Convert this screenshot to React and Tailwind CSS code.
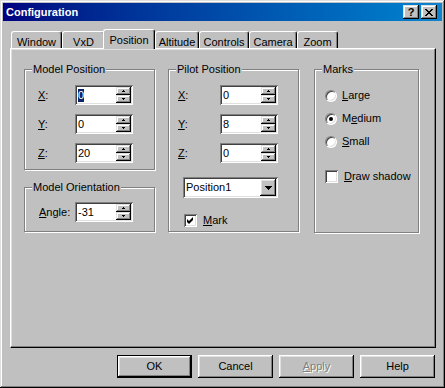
import React from "react";

const raised =
  "bg-[#c0c0c0] shadow-[inset_-1px_-1px_#000,inset_1px_1px_#fff,inset_-2px_-2px_#808080,inset_2px_2px_#dfdfdf]";
const smallRaised =
  "bg-[#c0c0c0] shadow-[inset_-1px_-1px_#000,inset_1px_1px_#dfdfdf,inset_-2px_-2px_#808080,inset_2px_2px_#fff]";
const sunken =
  "bg-white shadow-[inset_1px_1px_#808080,inset_-1px_-1px_#fff,inset_2px_2px_#404040,inset_-2px_-2px_#dfdfdf]";

function U({ children }) {
  return <span className="underline underline-offset-[1px] decoration-1">{children}</span>;
}

function Arrow({ down }) {
  return (
    <svg width="3" height="2" viewBox="0 0 3 2" className="block">
      {down ? (
        <path d="M0 0h3v1H2v1H1V1H0z" fill="#000" />
      ) : (
        <path d="M1 0h1v1h1v1H0V1h1z" fill="#000" />
      )}
    </svg>
  );
}

function Spin({ value, selected }) {
  return (
    <div className={`flex h-[20px] w-[58px] p-[2px] ${sunken}`}>
      <div className="flex flex-1 items-center pl-[1px] leading-[13px]">
        {selected ? <span className="bg-[#0a246a] text-white">{value}</span> : <span>{value}</span>}
      </div>
      <div className="flex w-[15px] flex-col">
        <div className={`flex h-[8px] items-center justify-center ${smallRaised}`}>
          <Arrow />
        </div>
        <div className={`flex h-[8px] items-center justify-center ${smallRaised}`}>
          <Arrow down />
        </div>
      </div>
    </div>
  );
}

function Group({ title, className, children }) {
  return (
    <div
      className={`relative border border-[#808080] shadow-[1px_1px_0_#fff,inset_1px_1px_0_#fff] ${className}`}
    >
      <span className="absolute -top-[7px] left-[7px] bg-[#c0c0c0] px-[1px] leading-[13px]">{title}</span>
      {children}
    </div>
  );
}

function Radio({ checked, children }) {
  return (
    <div className="flex h-[13px] items-center">
      <div className="relative flex h-[12px] w-[12px] items-center justify-center rounded-full border border-t-[#808080] border-l-[#808080] border-r-white border-b-white bg-white shadow-[inset_1px_1px_#404040,inset_-1px_-1px_#dfdfdf]">
        {checked && <div className="h-[4px] w-[4px] rounded-full bg-black" />}
      </div>
      <span className="ml-[5px] leading-[13px]">{children}</span>
    </div>
  );
}

function Check({ checked, children }) {
  return (
    <div className="flex h-[13px] items-center">
      <div className={`flex h-[13px] w-[13px] items-center justify-center ${sunken}`}>
        {checked && (
          <svg width="13" height="13" viewBox="0 0 13 13" className="block">
            <path d="M3 5 L5 7 L9 3 L9 6 L5 10 L3 8 Z" fill="#000" />
          </svg>
        )}
      </div>
      <span className="ml-[6px] leading-[13px]">{children}</span>
    </div>
  );
}

function Button({ children, def, disabled }) {
  return (
    <div
      className={`flex h-[23px] w-[75px] items-center justify-center ${
        def
          ? "border border-black bg-[#c0c0c0] shadow-[inset_-1px_-1px_#000,inset_1px_1px_#fff,inset_-2px_-2px_#808080,inset_2px_2px_#dfdfdf]"
          : raised
      }`}
    >
      <span className={disabled ? "text-[#808080] [text-shadow:1px_1px_0_#fff]" : ""}>{children}</span>
    </div>
  );
}

function Tab({ children, w, selected }) {
  if (selected) {
    return (
      <div
        className={`relative z-10 -ml-[2px] flex h-[20px] ${w} items-start justify-center rounded-t-[3px] border-l border-t border-r border-l-white border-t-white border-r-black bg-[#c0c0c0] pt-[2px] shadow-[inset_-1px_0_#808080]`}
      >
        {children}
      </div>
    );
  }
  return (
    <div
      className={`mt-[2px] flex h-[17px] ${w} items-start justify-center rounded-t-[3px] border-l border-t border-r border-l-white border-t-white border-r-black bg-[#c0c0c0] pt-[2px] shadow-[inset_-1px_0_#808080]`}
    >
      {children}
    </div>
  );
}

const xCells = [
  [0, 0], [1, 0], [6, 0], [7, 0],
  [1, 1], [2, 1], [5, 1], [6, 1],
  [2, 2], [3, 2], [4, 2], [5, 2],
  [3, 3], [4, 3],
  [2, 4], [3, 4], [4, 4], [5, 4],
  [1, 5], [2, 5], [5, 5], [6, 5],
  [0, 6], [1, 6], [6, 6], [7, 6],
];

export default function App() {
  return (
    <div
      className={`flex h-[388px] w-[445px] flex-col bg-[#c0c0c0] p-[3px] text-[11px] text-black font-['Liberation_Sans',Arial,sans-serif] shadow-[inset_-1px_-1px_#000,inset_1px_1px_#dfdfdf,inset_-2px_-2px_#808080,inset_2px_2px_#fff]`}
    >
      {/* Title bar */}
      <div className="flex h-[18px] items-center bg-linear-to-r from-[#000080] to-[#1084d0] pl-[3px] pr-[5px]">
        <span className="flex-1 font-bold text-white leading-[13px]">Configuration</span>
        <div className={`flex h-[14px] w-[16px] items-center justify-center ${smallRaised}`}>
          <span className="font-bold leading-[11px] text-[11px]">?</span>
        </div>
        <div className={`ml-[2px] flex h-[14px] w-[16px] items-center justify-center ${smallRaised}`}>
          <svg width="8" height="7" viewBox="0 0 8 7" className="block">
            {xCells.map(([x, y], i) => (
              <rect key={i} x={x} y={y} width="1" height="1" fill="#000" />
            ))}
          </svg>
        </div>
      </div>

      {/* Tabs */}
      <div className="ml-[8px] mt-[8px] flex h-[19px] items-start">
        <Tab w="w-[51px]">Window</Tab>
        <Tab w="w-[43px]">VxD</Tab>
        <Tab w="w-[52px]" selected>
          Position
        </Tab>
        <Tab w="w-[44px]">Altitude</Tab>
        <Tab w="w-[50px]">Controls</Tab>
        <Tab w="w-[48px]">Camera</Tab>
        <Tab w="w-[41px]">Zoom</Tab>
      </div>

      {/* Panel */}
      <div className="ml-[7px] flex h-[300px] w-[426px] items-start border-l border-t border-r border-b border-l-white border-t-white border-r-black border-b-black pl-[13px] pt-[20px] shadow-[inset_-1px_-1px_#808080,inset_1px_1px_#dfdfdf]">
        {/* Column 1 */}
        <div className="flex w-[131px] flex-col">
          <Group title="Model Position" className="h-[101px] pl-[13px] pt-[15px]">
            <div className="flex flex-col gap-[9px]">
              <div className="flex items-center">
                <span className="w-[37px]">
                  <U>X</U>:
                </span>
                <Spin value="0" selected />
              </div>
              <div className="flex items-center">
                <span className="w-[37px]">
                  <U>Y</U>:
                </span>
                <Spin value="0" />
              </div>
              <div className="flex items-center">
                <span className="w-[37px]">
                  <U>Z</U>:
                </span>
                <Spin value="20" />
              </div>
            </div>
          </Group>
          <Group title="Model Orientation" className="mt-[17px] h-[45px] pl-[14px] pt-[14px]">
            <div className="flex items-center">
              <span className="w-[36px]">
                <U>A</U>ngle:
              </span>
              <Spin value="-31" />
            </div>
          </Group>
        </div>

        {/* Column 2 */}
        <Group title="Pilot Position" className="ml-[13px] h-[163px] w-[131px] pl-[9px] pt-[15px]">
          <div className="flex flex-col gap-[9px]">
            <div className="flex items-center">
              <span className="w-[42px]">
                <U>X</U>:
              </span>
              <Spin value="0" />
            </div>
            <div className="flex items-center">
              <span className="w-[42px]">
                <U>Y</U>:
              </span>
              <Spin value="8" />
            </div>
            <div className="flex items-center">
              <span className="w-[42px]">
                <U>Z</U>:
              </span>
              <Spin value="0" />
            </div>
          </div>
          <div className={`ml-[5px] mt-[14px] flex h-[21px] w-[95px] p-[2px] ${sunken}`}>
            <div className="flex flex-1 items-center pl-[1px] leading-[13px]">Position1</div>
            <div className={`flex w-[16px] items-center justify-center ${raised}`}>
              <svg width="7" height="4" viewBox="0 0 7 4" className="block">
                <path d="M0 0h7v1H6v1H5v1H4v1H3V3H2V2H1V1H0z" fill="#000" />
              </svg>
            </div>
          </div>
          <div className="ml-[6px] mt-[16px]">
            <Check checked>
              <U>M</U>ark
            </Check>
          </div>
        </Group>

        {/* Column 3 */}
        <Group title="Marks" className="ml-[15px] h-[164px] w-[105px] pl-[10px] pt-[19px]">
          <div className="flex flex-col gap-[10px]">
            <Radio>
              <U>L</U>arge
            </Radio>
            <Radio checked>
              M<U>e</U>dium
            </Radio>
            <Radio>
              <U>S</U>mall
            </Radio>
          </div>
          <div className="mt-[22px]">
            <Check>
              <U>D</U>raw shadow
            </Check>
          </div>
        </Group>
      </div>

      {/* Buttons */}
      <div className="ml-[7px] mt-[7px] flex w-[426px] justify-end gap-[6px] pr-[1px]">
        <Button def>OK</Button>
        <Button>Cancel</Button>
        <Button disabled>
          <U>A</U>pply
        </Button>
        <Button>Help</Button>
      </div>
    </div>
  );
}
